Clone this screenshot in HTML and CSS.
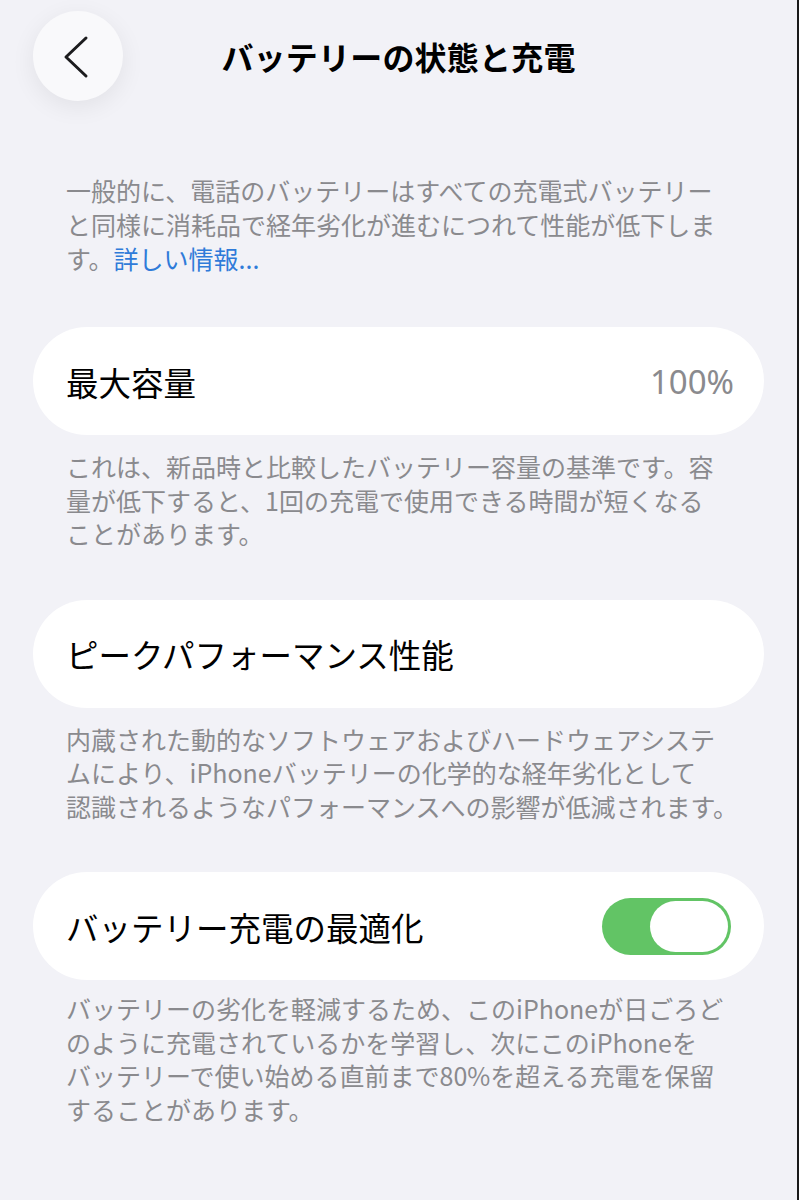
FILE: index.html
```html
<!DOCTYPE html>
<html lang="ja">
<head>
<meta charset="utf-8">
<title>バッテリーの状態と充電</title>
<link rel="stylesheet" href="styles.css">
</head>
<body>
<div class="screen">
  <header class="nav">
    <div class="nav-side">
      <button class="back" aria-label="戻る">
        <svg width="90" height="90" viewBox="0 0 90 90"><path d="M53 27 L33 46 L53 65" fill="none" stroke="#1c1c1e" stroke-width="3" stroke-linecap="round" stroke-linejoin="round"/></svg>
      </button>
    </div>
    <h1 class="title">バッテリーの状態と充電</h1>
    <div class="nav-side"></div>
  </header>

  <p class="intro">一般的に、電話のバッテリーはすべての充電式バッテリー<br>と同様に消耗品で経年劣化が進むにつれて性能が低下しま<br>す。<span class="link">詳しい情報...</span></p>

  <section class="group">
    <div class="card">
      <span class="label">最大容量</span>
      <span class="value">100%</span>
    </div>
    <p class="note">これは、新品時と比較したバッテリー容量の基準です。容<br>量が低下すると、1回の充電で使用できる時間が短くなる<br>ことがあります。</p>
  </section>

  <section class="group">
    <div class="card">
      <span class="label">ピークパフォーマンス性能</span>
    </div>
    <p class="note">内蔵された動的なソフトウェアおよびハードウェアシステ<br>ムにより、iPhoneバッテリーの化学的な経年劣化として<br>認識されるようなパフォーマンスへの影響が低減されます。</p>
  </section>

  <section class="group">
    <div class="card">
      <span class="label">バッテリー充電の最適化</span>
      <span class="toggle"><span class="knob"></span></span>
    </div>
    <p class="note note-last">バッテリーの劣化を軽減するため、このiPhoneが日ごろど<br>のように充電されているかを学習し、次にこのiPhoneを<br>バッテリーで使い始める直前まで80%を超える充電を保留<br>することがあります。</p>
  </section>
</div>
</body>
</html>
```

FILE: styles.css
```css
html, body {
  margin: 0;
  padding: 0;
  background: #f2f2f7;
}
body {
  font-family: "Noto Sans CJK JP", "Noto Sans", sans-serif;
  color: #000;
}
.screen {
  width: 797px;
  min-height: 1200px;
  border-right: 2px solid #1a1a1a;
  background: #f2f2f7;
  overflow: hidden;
}
.nav {
  display: grid;
  grid-template-columns: 1fr auto 1fr;
  align-items: center;
  padding: 11px 33px 0;
  height: 90px;
}
.back {
  width: 90px;
  height: 90px;
  padding: 0;
  border: none;
  border-radius: 50%;
  background: #f9f9fb;
  box-shadow: 0 6px 24px rgba(0, 0, 0, 0.07);
  display: block;
}
.back svg { display: block; }
.title {
  margin: 0;
  font-size: 32px;
  font-weight: 700;
  line-height: 40px;
  letter-spacing: 0.2px;
  color: #000;
}
.intro, .note {
  margin: 0;
  padding: 0 66px;
  font-size: 25px;
  line-height: 33.5px;
  color: #8a8a8e;
  white-space: nowrap;
}
.intro {
  margin-top: 72px;
  margin-bottom: 52px;
  line-height: 34px;
}
.link { color: #2f7bd9; }
.group {
  margin: 0 0 49px;
}
.card {
  margin: 0 33px;
  height: 108px;
  border-radius: 54px;
  background: #fff;
  display: flex;
  align-items: center;
  justify-content: space-between;
  padding: 0 33px;
  box-sizing: border-box;
}
.label {
  font-size: 32.5px;
  color: #000;
}
.value {
  font-size: 33px;
  color: #8a8a8e;
  font-family: "Noto Sans", "Noto Sans CJK JP", sans-serif;
  margin-right: -3px;
}
.note {
  margin-top: 15px;
}
.note-last {
  margin-top: 12px;
}
.toggle {
  width: 129px;
  height: 57px;
  border-radius: 29px;
  background: #62c465;
  display: flex;
  align-items: center;
  justify-content: flex-end;
  padding: 0 3px;
  box-sizing: border-box;
}
.knob {
  width: 78px;
  height: 51px;
  border-radius: 26px;
  background: #fff;
}
```
